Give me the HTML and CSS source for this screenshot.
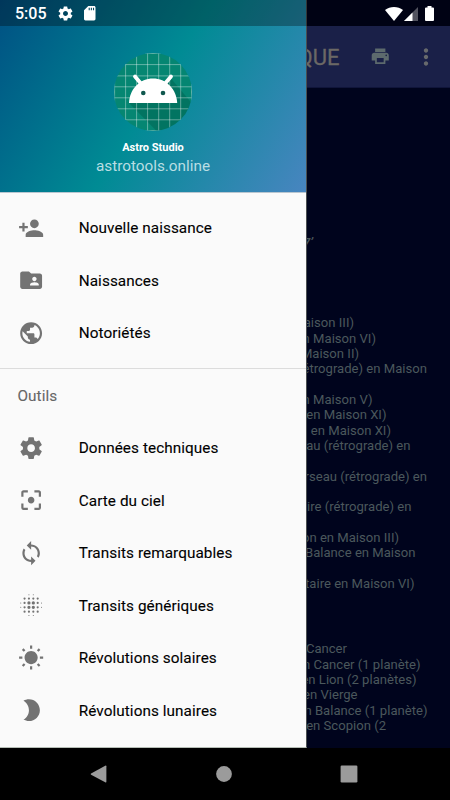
FILE: index.html
```html
<!DOCTYPE html>
<html lang="fr">
<head>
<meta charset="utf-8">
<title>Astro Studio</title>
<link rel="stylesheet" href="styles.css">
</head>
<body>
<div class="screen">
  <main class="page">
    <header class="toolbar">
      <h1 class="toolbar-title">QUE</h1>
      <svg class="icon-print" viewBox="0 0 24 24"><path d="M19 8H5c-1.660 0-3 1.340-3 3v6h4v4h12v-4h4v-6c0-1.660-1.340-3-3-3zm-3 11H8v-5h8v5zm3-7c-.550 0-1-.450-1-1s.450-1 1-1 1 .450 1 1-.450 1-1 1zm-1-9H6v4h12V3z"/></svg>
      <svg class="icon-more" viewBox="0 0 24 24"><path d="M12 8c1.100 0 2-.900 2-2s-.900-2-2-2-2 .900-2 2 .900 2 2 2zm0 2c-1.100 0-2 .900-2 2s.900 2 2 2 2-.900 2-2-.900-2-2-2zm0 6c-1.100 0-2 .900-2 2s.900 2 2 2 2-.900 2-2-.900-2-2-2z"/></svg>
    </header>
    <div class="report">
      <p class="coords">7’</p>
      <div class="lines">
        <p style="width:354px">Maison III)</p>
        <p style="width:376px">en Maison VI)</p>
        <p style="width:359px">Maison II)</p>
        <p style="width:427px">(rétrograde) en Maison</p>
        <p></p>
        <p style="width:372.500px">en Maison V)</p>
        <p style="width:386.500px">en Maison XI)</p>
        <p style="width:391px">en Maison XI)</p>
        <p style="width:410.500px">Verseau (rétrograde) en</p>
        <p></p>
        <p style="width:427px">Verseau (rétrograde) en</p>
        <p></p>
        <p style="width:411.500px">Sagittaire (rétrograde) en</p>
        <p></p>
        <p style="width:399px">Scorpion en Maison III)</p>
        <p style="width:415.500px">Balance en Maison</p>
        <p></p>
        <p style="width:414.500px">Sagittaire en Maison VI)</p>
      </div>
      <div class="lines houses">
        <p style="width:347px">Cancer</p>
        <p style="width:420.500px">en Cancer (1 planète)</p>
        <p style="width:416.500px">en Lion (2 planètes)</p>
        <p style="width:357.500px">en Vierge</p>
        <p style="width:427.500px">en Balance (1 planète)</p>
        <p style="width:386px">en Scopion (2</p>
      </div>
    </div>
  </main>

  <aside class="drawer">
    <div class="drawer-header">
      <svg class="logo" viewBox="114 52.500 78 78">
        <clipPath id="disc"><circle cx="153" cy="91.500" r="39"/></clipPath>
        <g clip-path="url(#disc)">
          <rect x="114" y="52" width="78" height="79" fill="#058672"/>
          <path d="M129 102.500L165 139h38V116L171 78l-18 24z" fill="#006653" fill-opacity=".55"/>
          <path d="M114.600 52v79M125.600 52v79M136.600 52v79M147.600 52v79M158.700 52v79M169.700 52v79M180.700 52v79M191.500 52v79M114 53h78M114 64.100h78M114 75.400h78M114 86.300h78M114 97.300h78M114 108.300h78M114 119.300h78M114 130.200h78" stroke="#fff" stroke-opacity=".42" stroke-width=".9"/>
        </g>
        <path d="M129 102.500C129.500 88.500 140 78 153 78s23.500 10.500 24.200 24.500z" fill="#fff"/>
        <path d="M135 76l5.500 6.500M171 76l-5.500 6.500" stroke="#fff" stroke-width="3.800" stroke-linecap="round"/>
        <circle cx="143.300" cy="92.500" r="2.300" fill="#10584e"/><circle cx="163" cy="92.500" r="2.300" fill="#10584e"/>
      </svg>
      <div class="app-name">Astro Studio</div>
      <div class="app-site">astrotools.online</div>
    </div>
    <nav class="menu">
      <a class="item"><svg viewBox="0 0 24 24"><path d="M15 12c2.210 0 4-1.790 4-4s-1.790-4-4-4-4 1.790-4 4 1.790 4 4 4zm-9-2V7H4v3H1v2h3v3h2v-3h3v-2H6zm9 4c-2.670 0-8 1.340-8 4v2h16v-2c0-2.660-5.330-4-8-4z"/></svg><span>Nouvelle naissance</span></a>
      <a class="item"><svg viewBox="0 0 24 24"><path d="M20 6h-8l-2-2H4c-1.100 0-1.990.900-1.990 2L2 18c0 1.100.900 2 2 2h16c1.100 0 2-.900 2-2V8c0-1.100-.900-2-2-2zm-5 3c1.100 0 2 .900 2 2s-.900 2-2 2-2-.900-2-2 .900-2 2-2zm4 8h-8v-1c0-1.330 2.670-2 4-2s4 .670 4 2v1z"/></svg><span>Naissances</span></a>
      <a class="item"><svg viewBox="0 0 24 24"><path d="M12 2C6.480 2 2 6.480 2 12s4.480 10 10 10 10-4.480 10-10S17.520 2 12 2zm-1 17.930c-3.950-.490-7-3.850-7-7.930 0-.620.080-1.210.210-1.790L9 15v1c0 1.100.900 2 2 2v1.930zm6.900-2.540c-.260-.810-1-1.390-1.900-1.390h-1v-3c0-.550-.450-1-1-1H8v-2h2c.550 0 1-.450 1-1V7h2c1.100 0 2-.900 2-2v-.410c2.930 1.190 5 4.060 5 7.410 0 2.080-.800 3.970-2.100 5.390z"/></svg><span>Notoriétés</span></a>
    </nav>
    <nav class="menu tools">
      <h2 class="subheader">Outils</h2>
      <a class="item"><svg viewBox="0 0 24 24"><path id="gear" d="M19.430 12.980c.040-.320.070-.640.070-.980s-.030-.660-.070-.980l2.110-1.650c.190-.150.240-.420.120-.640l-2-3.460c-.120-.220-.390-.300-.610-.220l-2.490 1c-.520-.400-1.080-.730-1.690-.980l-.380-2.650C14.460 2.180 14.250 2 14 2h-4c-.250 0-.460.180-.490.420l-.380 2.650c-.610.250-1.170.590-1.690.980l-2.490-1c-.230-.090-.490 0-.610.220l-2 3.460c-.130.220-.070.490.120.640l2.110 1.650c-.040.320-.070.650-.070.980s.030.660.070.980l-2.110 1.650c-.190.150-.240.420-.120.640l2 3.460c.120.220.390.300.610.220l2.490-1c.520.400 1.080.730 1.690.980l.380 2.650c.030.240.240.420.490.420h4c.250 0 .460-.180.490-.420l.380-2.650c.610-.250 1.170-.590 1.690-.980l2.490 1c.230.090.490 0 .610-.220l2-3.460c.120-.220.070-.490-.120-.640l-2.110-1.650zM12 15.500c-1.930 0-3.500-1.570-3.500-3.500s1.570-3.500 3.500-3.500 3.500 1.570 3.500 3.500-1.570 3.500-3.500 3.500z"/></svg><span>Données techniques</span></a>
      <a class="item"><svg viewBox="0 0 24 24"><path d="M5 15H3v4c0 1.100.900 2 2 2h4v-2H5v-4zM5 5h4V3H5c-1.100 0-2 .900-2 2v4h2V5zm14-2h-4v2h4v4h2V5c0-1.100-.900-2-2-2zm0 16h-4v2h4c1.100 0 2-.900 2-2v-4h-2v4zM12 9c-1.660 0-3 1.340-3 3s1.340 3 3 3 3-1.340 3-3-1.340-3-3-3z"/></svg><span>Carte du ciel</span></a>
      <a class="item"><svg viewBox="0 0 24 24"><path d="M12 4V1L8 5l4 4V6c3.310 0 6 2.690 6 6 0 1.010-.250 1.970-.700 2.800l1.460 1.460C19.540 15.030 20 13.570 20 12c0-4.420-3.580-8-8-8zm0 14c-3.310 0-6-2.690-6-6 0-1.010.250-1.970.700-2.800L5.240 7.740C4.460 8.970 4 10.430 4 12c0 4.420 3.580 8 8 8v3l4-4-4-4v3z"/></svg><span>Transits remarquables</span></a>
      <a class="item"><svg class="dots" viewBox="0 0 24 24"><path class="dot-l" d="M10 10h0M14 10h0M10 14h0M14 14h0"/><path class="dot-m" d="M6 6h0M10 6h0M14 6h0M18 6h0M6 10h0M18 10h0M6 14h0M18 14h0M6 18h0M10 18h0M14 18h0M18 18h0"/><path class="dot-s" d="M10 2.500h0M14 2.500h0M10 21.500h0M14 21.500h0M2.500 10h0M2.500 14h0M21.500 10h0M21.500 14h0"/></svg><span>Transits génériques</span></a>
      <a class="item"><svg viewBox="0 0 24 24"><path d="M6.760 4.840l-1.800-1.790-1.410 1.410 1.790 1.790 1.420-1.410zM4 10.500H1v2h3v-2zm9-9.950h-2V3.500h2V.550zm7.450 3.910l-1.410-1.410-1.790 1.790 1.410 1.410 1.790-1.790zm-3.210 13.700l1.790 1.800 1.410-1.410-1.800-1.790-1.400 1.400zM20 10.500v2h3v-2h-3zm-8-5c-3.310 0-6 2.690-6 6s2.690 6 6 6 6-2.690 6-6-2.690-6-6-6zm-1 16.950h2V19.500h-2v2.950zm-7.450-3.910l1.410 1.410 1.790-1.800-1.410-1.410-1.790 1.800z"/></svg><span>Révolutions solaires</span></a>
      <a class="item"><svg viewBox="0 0 24 24"><path d="M10 2c-1.820 0-3.530.500-5 1.350C7.990 5.080 10 8.300 10 12s-2.010 6.920-5 8.650C6.470 21.500 8.180 22 10 22c5.520 0 10-4.480 10-10S15.520 2 10 2z"/></svg><span>Révolutions lunaires</span></a>
    </nav>
  </aside>

  <div class="statusbar">
    <span class="clock">5:05</span>
    <svg class="st-gear" viewBox="0 0 24 24"><use href="#gear"/></svg>
    <svg class="st-sd" viewBox="4 2 16 20" preserveAspectRatio="none"><path d="M18 2h-8L4.020 8 4 20c0 1.100.900 2 2 2h12c1.100 0 2-.900 2-2V4c0-1.100-.900-2-2-2zm-6 6h-1.500V4.500H12V8zm3 0h-1.500V4.500H15V8zm3 0h-1.500V4.500H18V8z"/></svg>
    <svg class="st-wifi" viewBox="0 0 18 14"><path d="M0 3C5-1 13-1 18 3L9 14z"/></svg>
    <svg class="st-cell" viewBox="0 0 14 14"><path d="M14 0v14H0z" opacity=".32"/><path d="M8.500 5.500V14H0z"/></svg>
    <svg class="st-battery" viewBox="0 0 9 15"><path d="M2.500 0h4v1.400H8q1 0 1 1V14q0 1-1 1H1q-1 0-1-1V2.400q0-1 1-1h1.500z"/></svg>
  </div>

  <footer class="navbar">
    <svg viewBox="0 0 18 18"><path d="M15.200 .800Q16.400.200 16.400 1.300v15.500q0 1.100-1.200.500L1.100 9.700q-.900-.600 0-1.200z"/></svg>
    <svg viewBox="0 0 18 18"><circle cx="9" cy="9" r="7.900"/></svg>
    <svg viewBox="0 0 18 18"><rect x=".600" y=".600" width="16.800" height="16.800" rx="1.200"/></svg>
  </footer>
</div>
</body>
</html>
```
FILE: styles.css
```css
* { box-sizing: border-box; }

body {
  margin: 0;
  font-family: Roboto, "Liberation Sans", sans-serif;
}

h1, h2, p { margin: 0; }

.screen {
  position: relative;
  display: grid;
  grid-template-rows: 748px 52px;
  width: 450px;
  height: 800px;
  overflow: hidden;
  background: #000;
}

/* Page dimmed behind the drawer */
.page {
  grid-area: 1 / 1;
  min-width: 0;
  padding-top: 26px;
  background: #00041d;
  overflow: hidden;
}

.toolbar {
  display: flex;
  align-items: center;
  height: 62px;
  padding-left: 297.500px;
  background: #1a2048;
  border-bottom: 1px solid #10153a;
}

.toolbar-title {
  width: 72px;
  margin-top: 2px;
  font-size: 22px;
  font-weight: 400;
  -webkit-text-stroke: .3px #6b6865;
  color: #6b6865;
}

.icon-print { width: 20.500px; height: 20.500px; fill: #5d6a6d; }
.icon-more { width: 26px; height: 26px; margin-left: 22.500px; fill: #67696c; }

.report {
  font-size: 13.1px;
  line-height: 15.33px;
  color: #4b585c;
}

.coords {
  width: 313px;
  margin-top: 147px;
  text-align: right;
  font-style: italic;
  font-weight: 500;
}

.lines { margin-top: 65px; }
.lines p { height: 15.33px; text-align: right; white-space: nowrap; }
.lines.houses { margin-top: 50px; }

/* Drawer */
.drawer {
  grid-area: 1 / 1;
  position: relative;
  width: 307px;
  background: #fafafa;
  border-right: 1px solid #4b4f50;
  border-bottom: 1px solid #b5bdb5;
}

.drawer-header {
  display: flex;
  flex-direction: column;
  align-items: center;
  height: 193px;
  padding-top: 52.500px;
  border-bottom: 1px solid #b9c6d0;
  background: linear-gradient(122deg, #005083, #008b94 50%, #4885c0);
}

.logo { width: 78px; height: 78px; }

.app-name {
  margin-top: 10px;
  font-size: 11px;
  line-height: 14px;
  font-weight: 700;
  color: #fff;
}

.app-site {
  margin-top: 1px;
  font-size: 15.3px;
  line-height: 20px;
  color: #b9dee3;
}

.menu { padding: 8.750px 0; }
.menu.tools { padding-top: 0; border-top: 1px solid #dcdcdc; }

.item {
  display: flex;
  align-items: center;
  height: 52.500px;
  padding-left: 17.500px;
  gap: 35px;
  font-size: 15.300px;
  letter-spacing: .07px;
  -webkit-text-stroke: .1px #000;
  color: #000;
}

.item svg { width: 26.250px; height: 26.250px; fill: #737373; }

.subheader {
  height: 52.750px;
  padding-left: 17.500px;
  font-size: 15.300px;
  line-height: 55px;
  font-weight: 400;
  letter-spacing: .07px;
  -webkit-text-stroke: .1px #666;
  color: #666;
}

.dots path { stroke: #737373; stroke-linecap: round; }
.dots .dot-l { stroke-width: 3; }
.dots .dot-m { stroke-width: 2; }
.dots .dot-s { stroke-width: 1; }

/* System bars */
.statusbar {
  position: absolute;
  inset: 0 0 auto 0;
  display: flex;
  align-items: center;
  height: 26px;
  padding: 1px 16px 0 15px;
  background: rgba(0, 0, 0, .3);
  color: #fff;
}

.statusbar svg { fill: #fff; }
.clock { width: 42px; font-size: 16px; font-weight: 500; }
.st-gear { width: 17px; height: 17px; }
.st-sd { width: 11.500px; height: 14.500px; margin-left: 10px; }
.st-wifi { width: 18px; height: 14px; margin-left: auto; }
.st-cell { width: 14px; height: 14px; margin-left: 1px; }
.st-battery { width: 9px; height: 15px; margin-left: 7.500px; }

.navbar {
  grid-area: 2 / 1;
  display: flex;
  justify-content: space-between;
  align-items: center;
  padding: 0 92px 0 90px;
  background: #000;
}

.navbar svg { width: 18px; height: 18px; fill: #9b9b9b; }
```
